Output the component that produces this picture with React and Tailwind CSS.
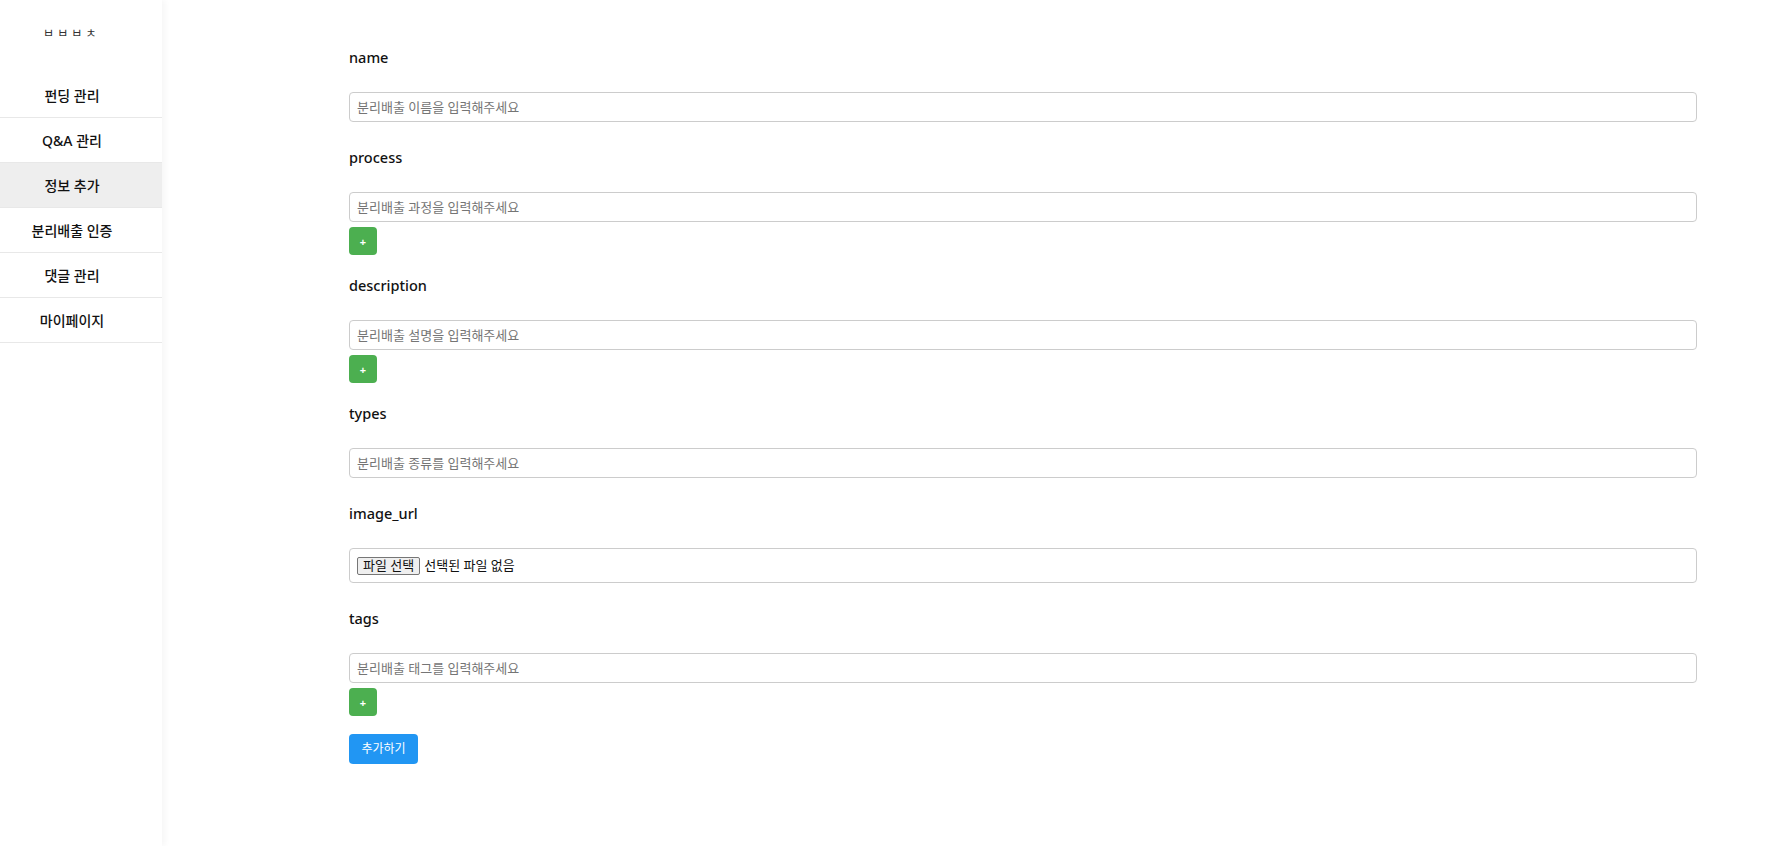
import React, { useState } from "react";

const menus = ["펀딩 관리", "Q&A 관리", "정보 추가", "분리배출 인증", "댓글 관리", "마이페이지"];

const fields = [
  { key: "name", placeholder: "분리배출 이름을 입력해주세요" },
  { key: "process", placeholder: "분리배출 과정을 입력해주세요", multi: true },
  { key: "description", placeholder: "분리배출 설명을 입력해주세요", multi: true },
  { key: "types", placeholder: "분리배출 종류를 입력해주세요" },
  { key: "image_url", file: true },
  { key: "tags", placeholder: "분리배출 태그를 입력해주세요", multi: true },
];

const Sidebar = ({ active }) => (
  <aside className="w-[162px] shrink-0 bg-white shadow-[3px_0_6px_rgba(0,0,0,0.04)] relative z-10">
    <div className="h-[73px] pt-[24px] pl-[43px] text-[12px] leading-[20px] text-[#333]">
      ㅂ ㅂ ㅂ ㅊ
    </div>
    <ul>
      {menus.map((m) => (
        <li
          key={m}
          className={`h-[45px] flex items-center justify-center pr-[18px] border-b border-[#e8e8e8] text-[14px] font-medium text-[#111] cursor-pointer ${
            m === active ? "bg-[#eeeeee]" : "bg-white"
          }`}
        >
          {m}
        </li>
      ))}
    </ul>
  </aside>
);

const PlusButton = () => (
  <button className="mt-[5px] w-[28px] h-[28px] rounded-[4px] bg-[#4caf50] text-white text-[11px] font-bold leading-none flex items-center justify-center">
    +
  </button>
);

const Field = ({ field }) => {
  return (
    <div className={field.multi ? "mb-[18px]" : "mb-[23px]"}>
      <div className="h-[24px] leading-[24px] text-[14.5px] font-medium text-[#111] mb-[23px]">
        {field.key}
      </div>
      {field.file ? (
        <div className="h-[35px] w-full border border-[#cccccc] rounded-[4px] flex items-center px-[7px] text-[13px] text-[#111]">
          <span className="h-[18px] px-[5px] flex items-center border border-[#767676] bg-[#efefef] rounded-[2px] leading-none">
            파일 선택
          </span>
          <span className="ml-[4px]">선택된 파일 없음</span>
        </div>
      ) : (
        <input
          type="text"
          placeholder={field.placeholder}
          className="block w-full h-[30px] border border-[#cccccc] rounded-[4px] px-[7px] text-[13px] text-[#111] placeholder:text-[#757575] outline-none"
        />
      )}
      {field.multi && <PlusButton />}
    </div>
  );
};

export default function App() {
  const [active] = useState("정보 추가");

  return (
    <div
      className="flex min-h-screen bg-white"
      style={{ fontFamily: '"Noto Sans", "Noto Sans CJK KR", sans-serif' }}
    >
      <Sidebar active={active} />
      <main className="flex-1 pt-[45px] pl-[187px] pr-[71px]">
        {fields.map((f) => (
          <Field key={f.key} field={f} />
        ))}
        <button className="w-[69px] h-[30px] rounded-[4px] bg-[#2196f3] text-white text-[12px] flex items-center justify-center">
          추가하기
        </button>
      </main>
    </div>
  );
}
